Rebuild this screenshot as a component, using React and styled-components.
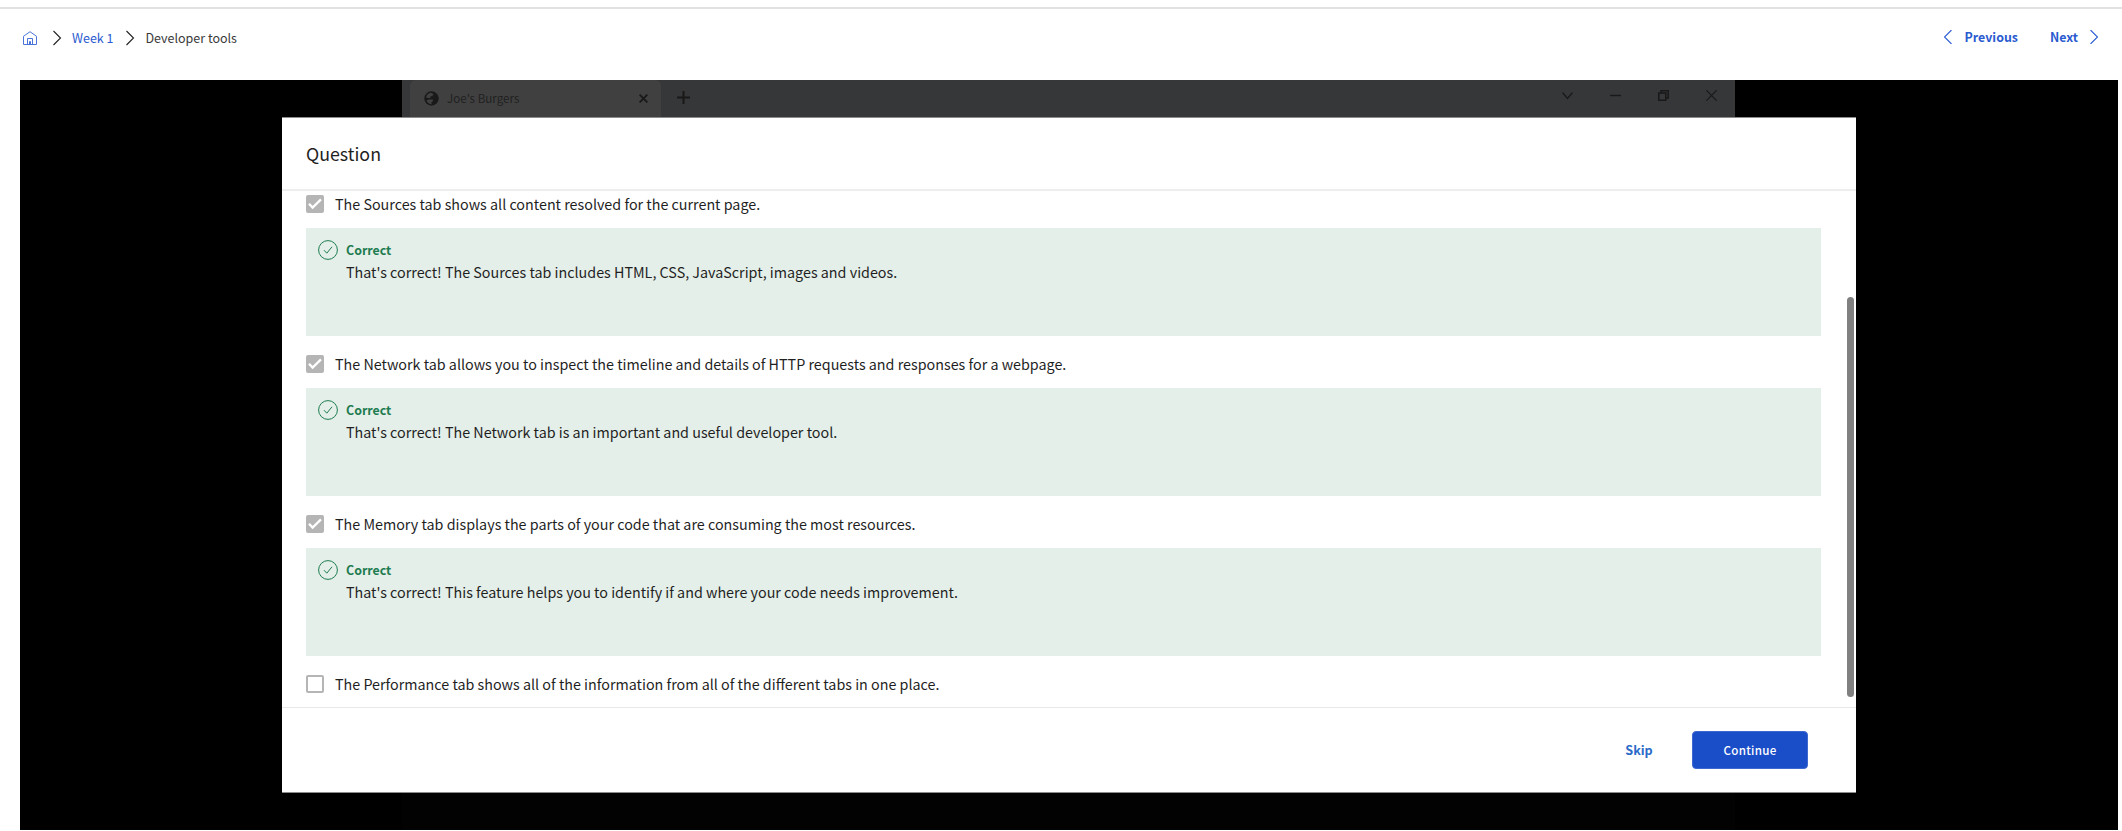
import React from "react";
import styled, { createGlobalStyle } from "styled-components";

const GlobalStyle = createGlobalStyle`
  * { box-sizing: border-box; }
  body {
    margin: 0;
    background: #fff;
    color: #1f1f1f;
    font-family: "Noto Sans CJK SC", "Open Sans", sans-serif;
    overflow: hidden;
  }
`;

const Page = styled.div`
  display: flex;
  flex-direction: column;
  height: 831px;
  padding-top: 7px;
`;

const TopBar = styled.header`
  display: flex;
  justify-content: space-between;
  height: 73px;
  flex: none;
  padding: 0 24px 0 23px;
  border-top: 2px solid #e1e1e1;
`;

const Breadcrumbs = styled.nav`
  display: flex;
  align-items: center;
  height: 58px;
`;

const Crumb = styled.span`
  font-size: 12.5px;
  line-height: 20px;
  white-space: nowrap;
  color: ${(p) => (p.$link ? "#2a5bd0" : "#3a3a3a")};
`;

const CrumbChevron = styled.svg`
  width: 8px;
  height: 14px;
  margin: 0 11px 0 ${(p) => p.$before}px;
  overflow: visible;
`;

const Pager = styled.div`
  display: flex;
  align-items: center;
  height: 56px;
`;

const PagerLink = styled.a`
  display: flex;
  align-items: center;
  gap: ${(p) => p.$gap}px;
  margin-left: ${(p) => p.$before || 0}px;
  font-size: 12.4px;
  font-weight: 700;
  line-height: 20px;
  color: #2a5bd0;
`;

const Player = styled.main`
  position: relative;
  flex: 1;
  display: flex;
  margin: 0 4px 1px 20px;
  padding-left: 382px;
  background: #000;
`;

const BrowserShot = styled.div`
  width: 1333px;
  background: #020202;
`;

const TabStrip = styled.div`
  display: flex;
  height: 37px;
  padding: 0 18px 0 8px;
  background: #363739;
  color: #191919;
`;

const BrowserTab = styled.div`
  display: flex;
  align-items: center;
  width: 251px;
  padding: 0 13px 1px 14px;
  border-radius: 6px 6px 0 0;
  background: #404040;
`;

const TabTitle = styled.span`
  flex: 1;
  margin-left: 8px;
  font-size: 11.6px;
  line-height: 18px;
  color: #202020;
`;

const StripIcon = styled.svg`
  width: ${(p) => p.$size}px;
  height: ${(p) => p.$size}px;
  flex: none;
`;

const NewTab = styled.div`
  flex: 1;
  display: flex;
  align-items: center;
  padding: 0 0 2px 16px;
`;

const WindowControls = styled.div`
  display: flex;
  align-items: center;
  gap: 37px;
  padding-bottom: 7px;
`;

const Dialog = styled.section`
  position: absolute;
  top: 37px;
  left: 262px;
  width: 1574px;
  height: 676px;
  display: flex;
  flex-direction: column;
  background: #fff;
  border: solid #8c8c8c;
  border-width: 1px 0;
`;

const DialogHeader = styled.div`
  flex: none;
  height: 73px;
  padding: 23px 24px 0;
  border-bottom: 2px solid #eee;
`;

const DialogTitle = styled.h2`
  margin: 0;
  font-size: 17.8px;
  font-weight: 400;
  line-height: 24px;
`;

const DialogBody = styled.div`
  flex: 1;
  min-height: 0;
  display: flex;
  justify-content: space-between;
  padding: 4px 2px 0 24px;
`;

const Options = styled.div`
  width: 1515px;
`;

const Option = styled.div`
  height: 160px;
`;

const OptionLabel = styled.label`
  display: flex;
  align-items: center;
  height: 18px;
  font-size: 14.32px;
  line-height: 18px;
  white-space: nowrap;
`;

const OptionText = styled.span`
  margin-left: 11px;
`;

const Checkbox = styled.span`
  display: flex;
  width: 18px;
  height: 18px;
  border: 2px solid #b5b5b5;
  border-radius: 2px;
  background: ${(p) => (p.$checked ? "#b5b5b5" : "#fff")};
`;

const Feedback = styled.div`
  display: flex;
  height: 108px;
  margin-top: 15px;
  padding: 12px;
  background: #e5efe9;
`;

const FeedbackText = styled.div`
  margin: -1px 0 0 8px;
  font-size: 14.32px;
  line-height: 22px;
  color: #1f1f1f;
`;

const Verdict = styled.div`
  font-size: 12.4px;
  font-weight: 700;
  color: #1d7c50;
`;

const ScrollThumb = styled.div`
  width: 7px;
  height: 400px;
  margin-top: 102px;
  border-radius: 4px;
  background: #808080;
`;

const DialogFooter = styled.footer`
  flex: none;
  display: flex;
  justify-content: flex-end;
  align-items: center;
  height: 85px;
  padding: 0 48px 0 0;
  border-top: 1px solid #e8e8e8;
`;

const SkipButton = styled.button`
  width: 28px;
  margin-right: 39px;
  padding: 0;
  border: 0;
  background: none;
  font: 700 12.6px/20px "Noto Sans CJK SC", sans-serif;
  color: #2a6ac8;
`;

const ContinueButton = styled.button`
  width: 116px;
  height: 38px;
  padding: 0;
  border: 1px solid #3c68d0;
  border-radius: 4px;
  background: #1a4dc8;
  font: 500 11.6px/20px "Noto Sans CJK SC", sans-serif;
  letter-spacing: 0.3px;
  color: #fff;
`;

const options = [
  {
    text: "The Sources tab shows all content resolved for the current page.",
    feedback: "That's correct! The Sources tab includes HTML, CSS, JavaScript, images and videos.",
  },
  {
    text: "The Network tab allows you to inspect the timeline and details of HTTP requests and responses for a webpage.",
    feedback: "That's correct! The Network tab is an important and useful developer tool.",
  },
  {
    text: "The Memory tab displays the parts of your code that are consuming the most resources.",
    feedback: "That's correct! This feature helps you to identify if and where your code needs improvement.",
  },
  { text: "The Performance tab shows all of the information from all of the different tabs in one place." },
];

function Chevron({ before }) {
  return (
    <CrumbChevron $before={before} viewBox="0 0 8 14" fill="none" stroke="#222" strokeWidth="1.1">
      <path d="M.5 0 7.5 7 .5 14" />
    </CrumbChevron>
  );
}

function Home() {
  return (
    <svg width="14" height="14" viewBox="0 0 14 14" fill="none" stroke="#4a74d9">
      <path d="M.5 5.3V13.5h13V5.3L7 .7Z" />
      <path d="M4.5 13.5v-6h5v6M6.5 13.5v-3h1v3" />
    </svg>
  );
}

function PagerArrow({ d }) {
  return (
    <svg width="8" height="14" viewBox="0 0 8 14" fill="none" stroke="#2a5bd0" strokeWidth="1.1">
      <path d={d} />
    </svg>
  );
}

function OptionRow({ text, feedback }) {
  return (
    <Option>
      <OptionLabel>
        <Checkbox $checked={!!feedback}>
          {feedback && (
            <svg width="14" height="14" viewBox="0 0 14 14" fill="none" stroke="#fff" strokeWidth="2.3">
              <path d="m1 6.8 3.6 3.8L13 2.4" />
            </svg>
          )}
        </Checkbox>
        <OptionText>{text}</OptionText>
      </OptionLabel>
      {feedback && (
        <Feedback>
          <svg width="20" height="20" viewBox="0 0 20 20" fill="none" stroke="#1d7c50">
            <circle cx="10" cy="10" r="9.4" />
            <path d="m6 10.2 2.8 3L14 6.8" />
          </svg>
          <FeedbackText>
            <Verdict>Correct</Verdict>
            {feedback}
          </FeedbackText>
        </Feedback>
      )}
    </Option>
  );
}

export default function App() {
  return (
    <Page>
      <GlobalStyle />
      <TopBar>
        <Breadcrumbs>
          <Home />
          <Chevron before={16} />
          <Crumb $link>Week 1</Crumb>
          <Chevron before={13} />
          <Crumb>Developer tools</Crumb>
        </Breadcrumbs>
        <Pager>
          <PagerLink $gap={13}>
            <PagerArrow d="M7.5 0 .5 7l7 7" />
            Previous
          </PagerLink>
          <PagerLink $gap={12} $before={32}>
            Next
            <PagerArrow d="M.5 0 7.5 7l-7 7" />
          </PagerLink>
        </Pager>
      </TopBar>
      <Player>
        <BrowserShot>
          <TabStrip>
            <BrowserTab>
              <StripIcon $size={15} viewBox="0 0 15 15">
                <circle cx="7.5" cy="7.5" r="7.2" fill="#191919" />
                <path d="M7 1.7 9.5 3 8.3 5.2H6.4v1.9H4.2L2 6.4C2.4 4 4.4 2 7 1.7ZM4.6 8.4h4l.7 1.5-1.8 1v2.4c-2.2-.2-4.4-1.7-5-3.8Z" fill="#404040" />
              </StripIcon>
              <TabTitle>Joe's Burgers</TabTitle>
              <StripIcon $size={9} viewBox="0 0 9 9" stroke="#191919" strokeWidth="1.8">
                <path d="m.6.6 7.8 7.8m0-7.8L.6 8.4" />
              </StripIcon>
            </BrowserTab>
            <NewTab>
              <StripIcon $size={13} viewBox="0 0 13 13" stroke="#191919" strokeWidth="2">
                <path d="M6.5 0v13M0 6.5h13" />
              </StripIcon>
            </NewTab>
            <WindowControls>
              <StripIcon $size={11} viewBox="0 0 11 11" fill="none" stroke="#191919" strokeWidth="1.2">
                <path d="m.5 2.5 5 6 5-6" />
              </StripIcon>
              <StripIcon $size={11} viewBox="0 0 11 11" fill="none" stroke="#191919" strokeWidth="1.4">
                <path d="M0 5.5h11" />
              </StripIcon>
              <StripIcon $size={11} viewBox="0 0 11 11" fill="none" stroke="#191919" strokeWidth="1.5">
                <path d="M.8 3h7v7.2h-7ZM3 3V.8h7.2V8H8" />
              </StripIcon>
              <StripIcon $size={11} viewBox="0 0 11 11" fill="none" stroke="#191919" strokeWidth="1.2">
                <path d="m.3.3 10.4 10.4m0-10.4L.3 10.7" />
              </StripIcon>
            </WindowControls>
          </TabStrip>
        </BrowserShot>
        <Dialog>
          <DialogHeader>
            <DialogTitle>Question</DialogTitle>
          </DialogHeader>
          <DialogBody>
            <Options>
              {options.map((o) => (
                <OptionRow key={o.text} {...o} />
              ))}
            </Options>
            <ScrollThumb />
          </DialogBody>
          <DialogFooter>
            <SkipButton>Skip</SkipButton>
            <ContinueButton>Continue</ContinueButton>
          </DialogFooter>
        </Dialog>
      </Player>
    </Page>
  );
}
